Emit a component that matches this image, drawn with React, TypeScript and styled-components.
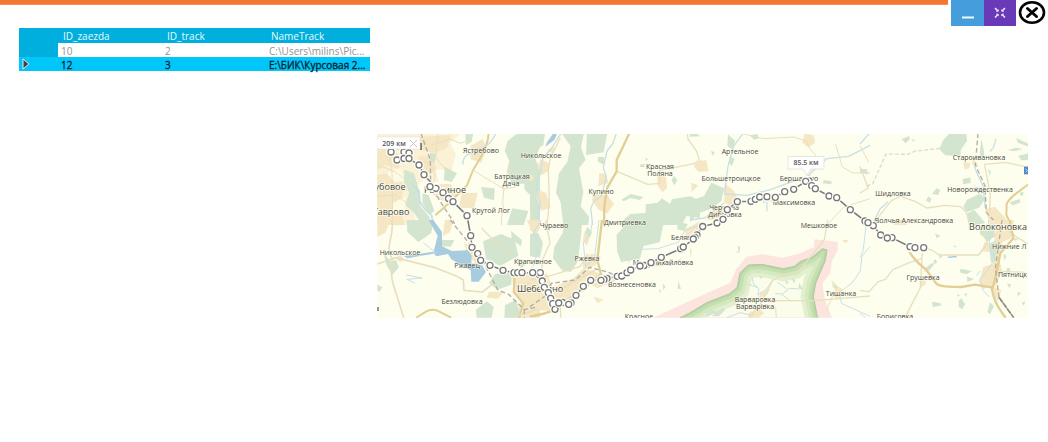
import React from "react";
import styled, { createGlobalStyle } from "styled-components";

const GlobalStyle = createGlobalStyle`
  * { box-sizing: border-box; }
  body { margin: 0; background: #fff; font-family: "Open Sans", "Noto Sans", sans-serif; }
`;

const TitleBar = styled.header`
  display: flex;
  align-items: flex-start;
  gap: 3px;
`;
const Accent = styled.div`
  flex: 1;
  height: 5px;
  background: #f57633;
  border-bottom: 1px solid #f8905a;
`;
const Controls = styled.div`
  display: flex;
  padding-right: 2px;
`;
const WindowButton = styled.button<{ $bg: string; $width: number }>`
  display: block;
  width: ${(p) => p.$width}px;
  height: 26px;
  padding: 0;
  border: 0;
  background: ${(p) => p.$bg};
  svg { display: block; width: 100%; height: 100%; }
`;

const Content = styled.main`
  display: grid;
  grid-template-columns: 351px minmax(0, 1fr);
  gap: 7px;
  align-items: start;
  padding: 2px 20px 20px 19px;
`;

const Grid = styled.table`
  width: 100%;
  table-layout: fixed;
  border-collapse: collapse;
  font-size: 10px;
  line-height: 14px;
`;
const SelectorCol = styled.col`
  width: 39px;
`;
const HeadCell = styled.th`
  height: 15px;
  padding: 0 0 0 5px;
  background: #00afdd;
  color: #e9faff;
  font-weight: 400;
  text-align: left;
`;
const Row = styled.tr<{ $selected?: boolean }>`
  height: 14px;
  background: ${(p) => (p.$selected ? "#00c6fa" : "#fff")};
  color: ${(p) => (p.$selected ? "#06202c" : "#929292")};
  -webkit-text-stroke: ${(p) => (p.$selected ? "0.3px #06202c" : "0")};
`;
const Cell = styled.td`
  padding: 2px 0 0 3px;
  height: 14px;
  line-height: 12px;
  white-space: nowrap;
`;
const Selector = styled.th<{ $selected?: boolean }>`
  padding: 0 0 0 3px;
  background: ${(p) => (p.$selected ? "#00c6fa" : "#00afdd")};
  svg { display: block; }
`;

const MapPanel = styled.figure`
  margin: 106px 0 0;
`;
const MapSvg = styled.svg`
  display: block;
  width: 100%;
  height: auto;
  font-family: "Open Sans", "Noto Sans", sans-serif;
`;
const Forest = styled.path`
  fill: #d3e5ce;
`;
const Town = styled.path`
  fill: #f5e6c4;
`;
const Water = styled.path`
  fill: #a7cbdf;
`;
const River = styled.path<{ $w?: number }>`
  fill: none;
  stroke: #c8e0e6;
  stroke-width: ${(p) => p.$w ?? 4};
  stroke-linejoin: round;
`;
const Road = styled.path<{ $w?: number }>`
  fill: none;
  stroke: ${(p) => ((p.$w ?? 4) > 5 ? "#e2cf96" : "#e8dfbf")};
  stroke-width: ${(p) => p.$w ?? 4};
  stroke-linejoin: round;
`;
const Rail = styled.path`
  fill: none;
  stroke: #b1afa7;
  stroke-width: 4;
  stroke-dasharray: 14 8;
`;
const PlaceName = styled.text<{ $big?: boolean; $start?: boolean }>`
  font-size: ${(p) => (p.$big ? 9 : 7)}px;
  fill: #484844;
  stroke: #fffff0;
  stroke-width: ${(p) => (p.$big ? 2 : 1)}px;
  stroke-opacity: 0.7;
  paint-order: stroke;
  text-anchor: ${(p) => (p.$start ? "start" : "middle")};
`;
const Distance = styled.text`
  font-size: 7px;
  font-weight: 600;
  fill: #555;
  text-anchor: middle;
`;

/* One map tile, drawn at three units per map unit. */
function Tile({ x, y, children }: { x: number; y: number; children: React.ReactNode }) {
  return <g transform={`translate(${x} ${y}) scale(0.33333)`}>{children}</g>;
}

const route: [number, number][] = [
  [391, 152], [404, 152], [409, 153], [397, 160], [404, 158.5], [409, 158.5], [419, 165], [424, 174.7], [436, 188.3],
  [430, 186.7], [443, 192.7], [448.5, 198.5], [453, 201.7], [467, 215.7], [470.7, 235.7],
  [472, 247.3], [477.7, 253.7], [480.7, 260.3], [490, 265.3], [503, 270.3], [514, 272.7],
  [517.7, 272.7], [522, 272.7], [540.3, 272.7], [532.7, 272.7], [542.3, 281], [544.3, 287.3],
  [548.3, 292.7], [550.7, 298.3], [552.7, 303.7], [555, 309.3], [562.7, 302.5], [558.7, 303],
  [571, 303], [568.7, 304.3], [576, 295.3], [583.3, 286.3], [590.7, 280.3], [607, 278.5], [604, 279.5], [601, 280.3],
  [617.3, 276.3], [621.7, 276], [627, 272.7], [630.7, 270], [647, 264.5], [644, 265.5], [640, 266],
  [651, 262.7], [661.3, 257.3], [680.7, 248.7], [683.3, 247], [697, 235], [695, 237.5], [693.3, 239],
  [702.7, 226.5], [717, 223], [723, 219.3], [727.3, 209.7], [737.3, 201.7], [751, 201.3],
  [755.3, 199.3], [759.7, 197], [767, 196.7], [775.3, 197.3], [784.7, 191.7], [793.7, 189.3],
  [809, 181], [805.7, 181.3], [811.7, 185.7], [815.3, 188.7], [829, 196], [836.7, 197.7],
  [850.3, 209.7], [865, 221], [873.3, 225.7], [868, 222.7], [880.7, 235], [892, 237.7],
  [887.3, 238], [910, 246.7], [915, 247.7], [923.7, 247.7],
];
/* East of the turning point the line runs steadily eastwards. */
const turn = route.findIndex(([x, y]) => x === 555 && y === 309.3);
const west = route.slice(2, turn + 1);
const east = route.slice(turn + 1).sort((a, b) => a[0] - b[0]);
const routePath = "M" + [...west, ...east].map((p) => p.join(" ")).join("L");

const places: [string, number, number, boolean?][] = [
  ["Ястребово", 481, 153], ["Никольское", 541, 158], ["Батрацкая", 512, 179], ["Дача", 511, 186],
  ["Крутой Лог", 491, 213], ["Никольское", 400, 255], ["Ржавец", 467, 268], ["Безлюдовка", 462, 304],
  ["Чураево", 554, 228], ["Купино", 601, 194], ["Красная", 660, 169], ["Поляна", 660, 176],
  ["Дмитриевка", 625, 225], ["Крапивное", 533, 264], ["Ржевка", 587, 261], ["Вознесеновка", 632, 287],
  ["Мал. Михайловка", 663, 265], ["Беляв", 681, 240], ["Красное", 639, 319], ["Артельное", 740, 154],
  ["Большетроицкое", 731, 181], ["Бершаково", 799, 181], ["Максимовка", 794, 205],
  ["Червона", 724, 210], ["Дибровка", 725, 217], ["Мешковое", 819, 228], ["Варваровка", 755, 302],
  ["Варварівка", 755, 309], ["Тишанка", 841, 296], ["Шидловка", 893, 196], ["Староивановка", 979, 160],
  ["Новорождественка", 980, 192], ["Волчья Александровка", 914, 223], ["Грушевка", 923, 280],
  ["Борисовка", 895, 319], ["Дубовое", 387, 190, true], ["Таврово", 391, 215, true],
  ["Разумное", 445, 193, true], ["Шебекино", 540, 292, true], ["Волоконовка", 998, 230, true],
];

const frontier =
  "M-30 293L0 278 52 247 117 222 141 203 150 158 175 135 216 133 280 146 313 139 332 124 366 112 397 86 411 90 406 122 377 190 370 230 383 293";

function TrackMap() {
  return (
    <MapSvg viewBox="377 134 651 184" role="img" aria-label="Карта трека">
      <defs>
        <clipPath id="abroad"><path d={frontier + "Z"} /></clipPath>
      </defs>
      <rect x="377" y="134" width="651" height="184" fill="#fefeee" />

      <Tile x={370} y={125}>
        <Town d="M20 20H278L240 55 258 88 244 137 195 131 206 171 160 165 135 185 119 232 143 300H20Z" opacity=".55" />
        <Town d="M22 70L60 62 91 96 87 132 45 120 22 136ZM22 150L70 142 102 180 91 250 22 259ZM146 35L244 31 230 70 193 83 157 74ZM145 94L186 94 200 134 165 158ZM180 178L242 177 261 210 220 228 190 211ZM275 205L323 203 313 248 266 250ZM302 62L338 42 350 68 334 113 302 103ZM20 270L94 270 105 300H20Z" />
        <path d="M50 145L90 129 105 166 76 173ZM65 236L107 214 106 258 70 263Z" fill="#fdfbe4" />
        <Forest d="M103 134L132 145 148 199 151 243 179 277 182 300H156L133 265 106 239 118 203 102 170ZM46 66L77 66 69 91ZM180 83L199 86 193 114 180 106ZM157 205L176 211 193 257 180 269 158 234ZM286 25L310 25 305 50 288 61ZM224 125L261 145 245 171 222 166Z" />
        <Forest d="M413 48L442 25H510V65L496 102 510 133V300H478L486 217 463 193 463 176 425 176 411 137 418 109 404 77ZM333 186L374 190 372 226 342 218ZM427 250L475 258 461 300H411Z" />
        <Road $w={3} d="M22 123C66 130 92 150 112 171M52 62L66 140 68 300M144 111C184 107 206 139 189 178M20 215L75 209 113 235M204 25L197 99 239 146M395 300C390 270 406 258 398 236L404 158 428 113" />
        <Road $w={6} d="M356 25C354 70 326 105 308 138L291 181 241 231 196 271" />
        <Road $w={3} d="M310 135C357 168 380 176 401 193L436 185M184 60L240 42 271 55 302 46" />
        <River $w={4} d="M378 25C357 65 341 70 322 73 301 92 279 83 278 119M510 195L498 225 509 260" />
        <River $w={6} d="M128 180L147 198 149 229 165 252 185 272 190 300" />
        <Rail d="M153 25L181 105 182 185 254 296" />
      </Tile>

      <Tile x={370} y={220}>
        <Town d="M22 0H62L46 38 22 51ZM68 0H101L99 12 79 17ZM92 105L104 119 90 127 76 113ZM225 0H250L240 37 218 48ZM282 65L319 95 344 129 325 137 292 105ZM426 164L510 151V293H437L454 240 431 218ZM357 215L401 216 384 236 350 233ZM470 0H510V26L493 49Z" />
        <Forest d="M110 0H191L184 39 145 66 112 36ZM201 60L253 60 243 80 204 78ZM339 64L393 42 434 59 445 107 391 138 348 117ZM423 33L456 60 453 79 425 57ZM375 162L426 155 424 194 382 209 357 190ZM318 269L350 244 371 260 365 293H320ZM405 256L438 239 454 293H403ZM41 100L64 126 78 119 87 142 67 164 49 134ZM22 194L37 202 29 216 22 211ZM440 115L473 124 454 147Z" />
        <Water d="M176 0H190L216 36 216 79 246 93 292 91 305 106 304 131 333 130 348 156 326 185 304 185 302 151 267 132 244 118 234 102 199 109 190 98 203 48ZM101 108L190 95 190 101 112 115Z" />
        <River $w={3} d="M160 68L198 99M108 165L157 174 110 178 135 190" />
        <River $w={4} d="M510 0L489 43 510 92" />
        <Road $w={5} d="M65 0C76 48 41 78 67 116 60 164 66 186 80 225L101 293M22 132L76 113 192 142C242 162 259 165 280 180L282 211 337 216 369 191" />
        <Road $w={6} d="M139 293C167 275 180 263 202 272L244 293M434 160L431 216 460 250 447 293" />
        <Road $w={4} d="M335 25L372 62 423 101M422 293C465 281 499 269 510 262M510 184L465 194 447 224" />
        <Rail d="M241 0L294 66 340 126 383 209 417 224 463 269 496 262 510 239M463 269V293" />
      </Tile>

      <Tile x={530} y={125}>
        <Town d="M31 102L56 113 57 136 36 151 23 125ZM51 74L75 65 67 86ZM0 151L10 149V164L0 171ZM22 195L48 203 62 248 35 257 19 222ZM208 144L229 148 235 174 205 184ZM190 205L233 212 252 237 232 265 206 254 186 226ZM382 151L408 155 411 190 397 202 382 180ZM492 112H510V137L498 129ZM485 173L505 181 484 202Z" />
        <Forest d="M0 25H45L40 61 13 78 15 120 0 139ZM95 25H162L153 65 160 88 167 104 147 130 160 201 152 244 177 275 175 300H100L92 232 78 203 87 145 112 111 122 64ZM171 25H232L221 82 168 90ZM204 95L223 96 221 119 204 110ZM0 190L13 183 19 240 0 267ZM274 224L302 207 341 216 329 225 301 219 281 229ZM347 238L383 233 396 220 419 236 427 222 482 214 510 228V279L470 273 455 300H265L300 267 347 264ZM431 152L442 165 433 181 425 166ZM330 119L343 116 344 126 331 126ZM346 97L354 103 348 108Z" />
        <River $w={4} d="M93 25L62 74 39 96 31 145 19 183 31 240 22 300M259 25L249 54 231 78 220 128 229 157 214 213 193 227 182 250 188 300" />
        <Water d="M52 50L69 26 81 28 73 45 45 66Z" />
        <Road d="M91 38L61 100 55 133 58 230 51 300M472 25L474 42 500 79 510 112 387 137 390 175 353 178 261 139" />
        <Road $w={7} d="M298 25L260 105 260 139 232 188 223 243 222 300" />
      </Tile>

      <Tile x={530} y={220}>
        <Town d="M0 150L51 161 69 203 132 174 158 148 190 152 203 159 265 168 293 157 258 183 202 205 181 191 159 216 123 227 82 274 28 271 0 247ZM165 31L181 49 171 77 158 62ZM158 115L186 101 213 111 196 136 160 150ZM0 0H31L22 29 0 33ZM365 115L412 120 400 139 360 140ZM463 29L510 4V47L474 61ZM191 230L221 240 202 249Z" />
        <Forest d="M0 42L24 38 39 69 30 113 0 109ZM105 0H157L151 67 143 125 122 156 96 151 69 115 73 81 98 39ZM171 20L186 37 179 53 166 39ZM260 44L295 5H402L389 67 340 78 330 116 273 126 261 92ZM445 6L474 12 462 32 441 28ZM445 183L453 207 443 206ZM398 191L407 200 400 210ZM388 207L394 213 388 221ZM361 118L386 118 368 128Z" />
        <River $w={3} d="M33 0L9 41 29 76 9 139 0 148M188 0L181 40 160 68 167 141 194 110 207 0M293 130L331 88 383 86 446 66 466 30 510 16M381 127L425 137 453 116" />
        <Road $w={7} d="M0 289C53 282 91 265 107 243 158 210 188 184 213 163L202 120 216 0" />
        <Road d="M47 0L60 68 37 121 33 184 57 225M78 218L128 187 198 149M0 180L65 166 151 139 174 101M92 293L91 260" />
        <Rail d="M0 260L43 230 64 190 135 180 180 142 235 157 281 177" />
      </Tile>

      <Tile x={690} y={125}>
        <Town d="M344 25L370 31 376 53 354 67 337 53ZM18 107L49 106 56 139 26 140 12 127ZM104 175L133 199 151 235 127 249 103 232ZM66 258L94 245 107 273 87 287 47 283ZM227 211L271 219 260 234 232 228Z" />
        <Forest d="M114 28L135 47 129 74 112 63ZM120 94L134 101 125 124 116 111ZM64 173L103 190 94 228 65 251 26 265 0 291V229L42 213ZM402 165L425 169 424 178 398 175ZM513 132L531 133 534 149 515 143ZM0 25L20 25 31 34 0 35ZM179 31L202 27 207 40 192 44ZM63 77L74 82 68 94Z" />
        <River $w={4} d="M159 25L130 65 114 124 109 157 104 207 171 211 241 194 353 153 410 101 476 94 540 61M0 285L44 279 103 233M230 218L231 259M218 208L222 235" />
        <Road $w={3} d="M153 25L221 41 312 36 348 48 362 74 377 91 359 155M540 143L489 144 457 126 437 58M540 221L462 246 411 300M510 62L536 111" />
      </Tile>

      <Tile x={690} y={220}>
        <path d="M-110 293L-10 247 70 211 121 188 139 147 169 110 216 103 278 113 326 101 373 81 373 58 443 66 443 91 425 126 421 160 397 191 405 240 426 293Z" fill="#fbe5de" />
        <g clipPath="url(#abroad)">
          <path d={frontier} fill="#fbfce9" />
          <path d={frontier} fill="none" stroke="#e3f0cf" strokeWidth="76" />
          <path d={frontier} fill="none" stroke="#d4e9c0" strokeWidth="52" />
          <path d={frontier} fill="none" stroke="#c4e0b0" strokeWidth="30" />
          <path d={frontier} fill="none" stroke="#b7d6a3" strokeWidth="12" />
        </g>
        <path d={frontier} fill="none" stroke="#b9c8a8" strokeWidth="3" />
        <Town d="M0 85L6 91 0 114ZM177 277L210 267 222 280 205 293H174ZM210 218L241 207 231 224 206 235ZM436 196L457 206 448 239 431 231ZM458 60L472 59 474 66 462 68ZM425 180L438 193 428 203Z" />
        <Forest d="M143 78L151 81 148 97 137 98 145 92ZM305 174L316 180 312 191ZM328 188L339 210 325 205ZM285 178L298 190 288 191ZM98 263L106 269 87 289 65 289ZM63 267L86 277 43 291ZM432 195L443 197 440 206 431 203ZM207 168L219 170 212 177Z" />
        <River $w={3} d="M186 171L191 192 206 205 204 226M249 178L230 207 204 224M173 192L201 202M255 221L278 222 298 205 327 207M262 186L290 207M274 223L297 239M110 293L150 278 187 286M540 80L516 108 511 153 486 189 449 217 454 250 540 289" />
        <Road d="M178 293L211 252 248 181 267 171 327 153 403 59 413 0M135 240L260 242 374 242 540 228" />
        <Road $w={3} d="M225 252L257 264 259 293M429 226L409 273" />
      </Tile>

      <Tile x={860} y={125}>
        <Town d="M309 112L331 113 328 130 315 134ZM375 253L405 245 434 277 451 300H391ZM337 100L355 120 346 128 337 117ZM110 286L132 283 142 300H101Z" />
        <Forest d="M269 25L319 25 321 48 302 75 302 94 256 91 238 73 249 46ZM364 42L372 79 373 97 359 91ZM468 39L505 56V65L474 53ZM469 68L488 72 462 79 443 75ZM475 92L505 85 504 105 483 106ZM308 162L332 157 332 174 309 178ZM321 224L360 206 376 221 357 248 320 262 310 245ZM320 266L343 255 376 294 350 300H326ZM345 184L374 193 369 204 347 195ZM229 190L241 195 234 210 216 207ZM205 214L215 221 209 234 198 226ZM125 42L148 33 149 44 136 55ZM0 132L17 133 16 142 0 145ZM384 132L393 139 389 153ZM483 199L492 203 486 213 479 209ZM449 232L479 222 481 233 457 241ZM154 43L165 44 160 50Z" />
        <River d="M28 25L0 57M84 230L60 252 36 300M408 42L400 68 390 80M343 126L369 183 376 249" />
        <Road $w={4} d="M0 125L25 189 0 204M123 214L165 229 201 249 255 241 302 245 318 260 331 300M374 119L385 177 391 212 388 261M373 118L437 112 504 127M126 211L94 227 45 289" />
        <Road $w={6} d="M505 178C475 200 448 218 440 237L439 271 455 300" />
        <Rail d="M354 25L346 120 375 183 379 262 412 298" />
        <path d="M20 183L38 177 78 87 143 88 167 78 242 70" fill="none" stroke="#dedbc9" strokeWidth="4" strokeDasharray="12 6" />
        <rect x="492" y="125" width="14" height="23" fill="#4c8aca" />
        <path d="M496 131L502 137 497 142" fill="none" stroke="white" strokeWidth="2" />
      </Tile>

      <Tile x={860} y={220}>
        <Town d="M373 66L405 79 388 96 366 94ZM391 0H462L453 55 427 67 418 117 426 152 409 197 370 206 358 184 370 141 400 131 404 40Z" />
        <Forest d="M357 15L397 13 406 48 384 64 360 42ZM387 72L408 61 409 119 393 128ZM198 143L215 129 223 132 209 151 192 156ZM220 123L227 117 232 128 222 132ZM236 107L240 101 246 110 241 116ZM302 146L336 153 320 163 299 157ZM321 169L342 178 322 186ZM216 245L241 249 245 256 218 262ZM296 241L305 235 315 253 307 268 296 261ZM312 223L319 218 321 230ZM473 215L484 219 473 229ZM441 191L453 193 448 205ZM441 143L450 145 449 164 437 162ZM390 247L402 259 390 282 382 276ZM430 102L440 107 434 122ZM458 53L475 57 467 63ZM485 248L496 244 491 257ZM292 222L300 225 293 232ZM225 40L241 48 230 55ZM280 78L287 75 287 84Z" />
        <Town d="M178 184L196 181 198 191 181 205ZM400 200L424 210 415 244 397 225Z" />
        <Water d="M262 110L288 107 292 112 265 114Z" />
        <River $w={3} d="M18 22L9 94 0 112M385 0L389 83 404 119 382 151 359 180 369 211 388 231M0 280L17 293M350 167L360 153" />
        <Road $w={4} d="M0 211L27 215 55 185 76 178 99 149 148 128 187 115M187 98L181 203 135 293M194 83L214 90 238 105 356 105 384 66M343 0L371 45 382 67M439 26L471 52 504 71M494 157L421 154M417 138L400 152" />
        <Road $w={7} d="M149 96C164 124 183 135 199 150L230 192C245 204 287 199 304 201L345 194 398 203 410 157 421 100 460 55 449 0M395 198C399 244 420 270 437 293" />
        <Rail d="M426 0L406 145 417 232 461 293" />
        <path d="M417 232L461 293" stroke="#8d8983" strokeWidth="5" strokeDasharray="17 4" />
      </Tile>

      {places.map(([name, x, y, big], i) => (
        <PlaceName key={i} x={x} y={y} $big={big}>{name}</PlaceName>
      ))}
      <PlaceName x="992" y="249" $start>Нижние Л</PlaceName>
      <PlaceName x="998" y="277" $start>Пятницк</PlaceName>
      <path d="M378 307V311" stroke="#77756f" strokeWidth="1.5" />
      <path d="M421 143V150" stroke="#55534d" strokeWidth="1.5" />

      <path d={routePath} fill="none" stroke="#fff" strokeWidth="4" opacity=".6" />
      <path d={routePath} fill="none" stroke="#7b7b77" strokeWidth="1.6" />
      {route.map(([x, y], i) => (
        <g key={i}>
          <circle cx={x} cy={y} r="5" fill="#fffffb" opacity=".92" />
          <circle cx={x} cy={y} r="3" fill="#fff" stroke="#777774" strokeWidth="1.3" />
        </g>
      ))}

      <rect x="377" y="137" width="43" height="12" fill="#fff" stroke="#deded6" strokeWidth=".5" />
      <Distance x="394" y="146">209 км</Distance>
      <path d="M410 140L417 147M417 140L410 147" stroke="#b7b7b7" strokeWidth=".8" />
      <path d="M788 156.500H824V169H811L807 175 803 169H788Z" fill="#fff" stroke="#ddddd3" strokeWidth=".7" />
      <Distance x="806" y="165">85.5 км</Distance>
    </MapSvg>
  );
}

export default function App() {
  return (
    <>
      <GlobalStyle />
      <TitleBar>
        <Accent />
        <Controls>
          <WindowButton $bg="#459edb" $width={33} aria-label="Свернуть">
            <svg viewBox="0 0 33 26"><path d="M11 17.500H23" stroke="#f2f9fd" strokeWidth="2" /></svg>
          </WindowButton>
          <WindowButton $bg="#693ab7" $width={32} aria-label="Развернуть">
            <svg viewBox="0 0 32 26" fill="none" stroke="#f1ebfa" strokeWidth="1.5">
              <path d="M11 8L14 11M21 8L18 11M11 17.500L14 14.500M21 17.500L18 14.500" />
              <path d="M12 11.300H14.300V9.500M17.700 9.500V11.300H20M12 14.200H14.300V16M17.700 16V14.200H20" strokeWidth=".8" />
            </svg>
          </WindowButton>
          <WindowButton $bg="transparent" $width={30} aria-label="Закрыть">
            <svg viewBox="0 0 30 26" fill="none" stroke="#050505">
              <ellipse cx="16" cy="12.500" rx="12" ry="10.300" strokeWidth="2.600" />
              <path d="M11.500 8.500L20.500 16.500M20.500 8.500L11.500 16.500" strokeWidth="3" strokeLinecap="round" />
            </svg>
          </WindowButton>
        </Controls>
      </TitleBar>
      <Content>
        <Grid>
          <colgroup>
            <SelectorCol /><col /><col /><col />
          </colgroup>
          <thead>
            <tr>
              <HeadCell aria-label="Строка" />
              <HeadCell scope="col">ID_zaezda</HeadCell>
              <HeadCell scope="col">ID_track</HeadCell>
              <HeadCell scope="col">NameTrack</HeadCell>
            </tr>
          </thead>
          <tbody>
            <Row>
              <Selector scope="row" />
              <Cell>10</Cell>
              <Cell>2</Cell>
              <Cell>C:\Users\milins\Pic...</Cell>
            </Row>
            <Row $selected>
              <Selector scope="row" $selected>
                <svg width="8" height="12" viewBox="0 0 8 12" aria-hidden="true">
                  <path d="M1 1V11L7 6Z" fill="#45403e" stroke="#d9eef4" strokeWidth="1" />
                </svg>
              </Selector>
              <Cell>12</Cell>
              <Cell>3</Cell>
              <Cell>E:\БИК\Курсовая 2...</Cell>
            </Row>
          </tbody>
        </Grid>
        <MapPanel>
          <TrackMap />
        </MapPanel>
      </Content>
    </>
  );
}
